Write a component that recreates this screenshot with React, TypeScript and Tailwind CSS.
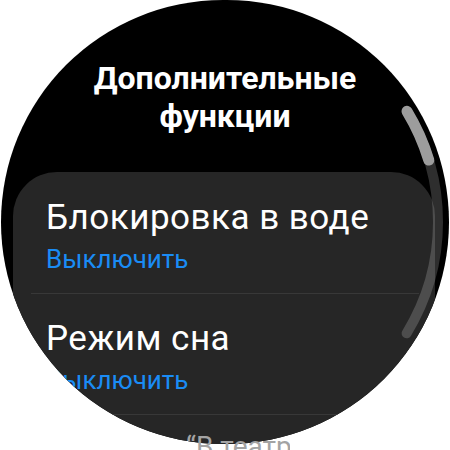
import React from "react";

const font = { fontFamily: "Roboto, 'Noto Sans', sans-serif" };

function Item({ title }: { title: string }) {
  return (
    <div className="flex flex-col pl-[33px] pt-[25px] pb-[19px]">
      <div className="h-[40px] text-[35px] leading-[40px] tracking-[0.5px] text-white whitespace-nowrap">{title}</div>
      <div className="mt-[6px] h-[30px] text-[26px] leading-[30px] text-[#1a8cf5] whitespace-nowrap">Выключить</div>
    </div>
  );
}

export default function App() {
  return (
    <div className="relative w-[450px] h-[450px] bg-white overflow-hidden" style={font}>
      <div className="ml-[1px] w-[448px] h-[444px] rounded-full bg-black overflow-hidden flex flex-col">
        <div className="pt-[59px] text-center text-[32px] leading-[38px] font-bold text-white">
          Дополнительные
          <br />
          функции
        </div>
        <div className="mt-[37px] ml-[12px] w-[422px] rounded-[44px] bg-[#262626] pt-[1px] flex flex-col">
          <Item title="Блокировка в воде" />
          <div className="ml-[18px] mr-[16px] h-px bg-[#383838]" />
          <Item title="Режим сна" />
          <div className="ml-[18px] mr-[16px] h-px bg-[#383838]" />
          <div className="h-[80px]" />
        </div>
      </div>
      <div className="absolute left-[186px] top-[431px] w-[104px] h-[19px] overflow-hidden">
        <div className="text-[28px] leading-[32px] text-[#a3a3a3] whitespace-nowrap">“В театре”</div>
      </div>
      <svg className="absolute inset-0" width="450" height="450" viewBox="0 0 450 450">
        <path d="M 407 111.3 A 213 213 0 0 1 406.6 333.3" fill="none" stroke="rgba(255,255,255,0.18)" strokeWidth="10" strokeLinecap="round" />
        <path d="M 407 111.3 A 213 213 0 0 1 428.8 160.1" fill="none" stroke="#9d9d9d" strokeWidth="11" strokeLinecap="round" />
      </svg>
    </div>
  );
}
